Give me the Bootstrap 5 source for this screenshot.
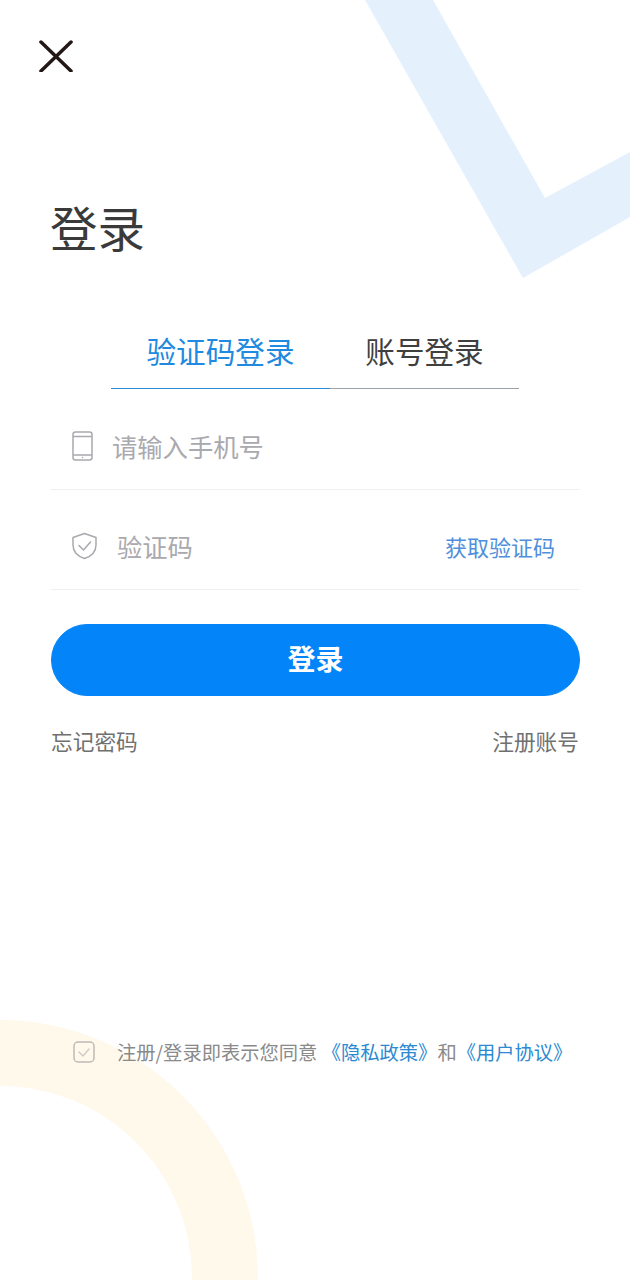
<!DOCTYPE html>
<html lang="zh-CN">
<head>
<meta charset="utf-8">
<title>登录</title>
<link href="https://cdn.jsdelivr.net/npm/bootstrap@5.3.0/dist/css/bootstrap.min.css" rel="stylesheet">
<style>
html,body{height:100%;margin:0;}
body{font-family:"Noto Sans CJK SC","Liberation Sans",sans-serif;background:#fff;overflow:hidden;}
.screen{position:relative;width:630px;height:1280px;overflow:hidden;padding:0 50px 0 51px;}
.decor{position:absolute;left:0;top:0;width:630px;height:1280px;}
.content{position:relative;}
.close-btn{display:block;margin:40px 0 0 -12px;width:34px;height:32px;padding:0;border:0;background:none;line-height:0;}
.page-title{font-size:47.5px;line-height:60px;font-weight:400;color:#3a3a3a;margin:125px 0 0 -1px;}
.tabs{margin:72px 0 0 60px;width:408px;}
.tab-item{display:block;text-align:center;font-size:29.6px;line-height:44px;padding-bottom:15px;border-bottom:1px solid #9ba3a8;color:#3f3f3f;text-decoration:none;}
.tab-a{width:219px;color:#1f8ae0;border-bottom-color:#2a8bd6;}
.tab-b{width:189px;}
.field{height:101px;border-bottom:1px solid #f0f0f0;padding-top:14px;}
.field-second{height:100px;padding-top:12px;}
.field-ph{font-size:25.300px;line-height:36px;color:#a9a9ae;}
.code-link{font-size:22px;line-height:32px;color:#4f8fdb;text-decoration:none;margin-right:25px;}
.submit-btn{--bs-btn-bg:#0384f8;--bs-btn-border-color:#0384f8;--bs-btn-hover-bg:#0384f8;--bs-btn-hover-border-color:#0384f8;--bs-btn-color:#fff;--bs-btn-hover-color:#fff;display:block;width:100%;height:72px;margin-top:34px;border-radius:36px;font-size:28px;font-weight:700;padding:0 0 6px;line-height:66px;}
.sub-links{margin-top:29px;font-size:21.700px;line-height:32px;}
.sub-links a{color:#707070;text-decoration:none;}
.sub-links a:last-child{margin-right:1px;}
.agree{position:absolute;left:73px;top:1038px;font-size:19.300px;line-height:28px;color:#8a8a8a;white-space:nowrap;}
.agree a{color:#2b8ad2;text-decoration:none;}
.agree-text{margin-left:22px;}
.ico-phone{margin-left:21px;margin-right:19px;}
.ico-shield{margin-left:20px;margin-right:19px;}
</style>
</head>
<body>
<div class="screen">
  <svg class="decor" viewBox="0 0 630 1280" aria-hidden="true">
    <polygon points="365,0 433,0 545,198 630,152 630,217 523,278" fill="#e4f1fd"/>
    <path d="M0 1020A258 258 0 0 1 258 1278V1280H192V1278A192 192 0 0 0 0 1086Z" fill="#fff9ec"/>
  </svg>
  <div class="content">
    <button class="close-btn" type="button" aria-label="关闭">
      <svg width="34" height="32" viewBox="0 0 34 32"><path d="M2 2L32 31M32 2L2 31" stroke="#231815" stroke-width="3.500" stroke-linecap="round" fill="none"/></svg>
    </button>
    <h1 class="page-title">登录</h1>
    <div class="tabs d-flex">
      <a class="tab-item tab-a" href="#">验证码登录</a>
      <a class="tab-item tab-b" href="#">账号登录</a>
    </div>
    <div class="field d-flex align-items-center">
      <svg class="ico-phone" width="21" height="30" viewBox="0 0 21 30" fill="none" stroke="#a9a9ae" stroke-width="1.500"><rect x="1" y="1" width="19" height="28" rx="2.500"/><path d="M1 5.500H20M1 24H20"/><circle cx="10.500" cy="26.500" r=".8" fill="#a9a9ae" stroke="none"/></svg>
      <span class="field-ph">请输入手机号</span>
    </div>
    <div class="field field-second d-flex align-items-center">
      <svg class="ico-shield" width="27" height="28" viewBox="0 0 27 28" fill="none" stroke="#a9a9ae" stroke-width="1.500" stroke-linejoin="round" stroke-linecap="round"><path d="M13.500 1.500L25 5.500V13C25 20 19.500 24.500 13.500 26.500C7.500 24.500 2 20 2 13V5.500Z"/><path d="M8 13.500L12.500 18L19.500 10"/></svg>
      <span class="field-ph">验证码</span>
      <a class="code-link ms-auto" href="#">获取验证码</a>
    </div>
    <button class="btn submit-btn" type="button">登录</button>
    <div class="sub-links d-flex justify-content-between">
      <a href="#">忘记密码</a>
      <a href="#">注册账号</a>
    </div>
  </div>
  <div class="agree d-flex align-items-center">
    <svg width="22" height="22" viewBox="0 0 22 22" fill="none" stroke="#bdbbb5" stroke-width="1.500" stroke-linecap="round" stroke-linejoin="round"><rect x="1" y="1" width="20" height="20" rx="4"/><path d="M6 11L10 15L16 8" stroke="#cfcdc6"/></svg>
    <span class="agree-text">注册/登录即表示您同意 <a href="#">《隐私政策》</a>和<a href="#">《用户协议》</a></span>
  </div>
</div>
<script src="https://cdn.jsdelivr.net/npm/bootstrap@5.3.0/dist/js/bootstrap.bundle.min.js"></script>
</body>
</html>
